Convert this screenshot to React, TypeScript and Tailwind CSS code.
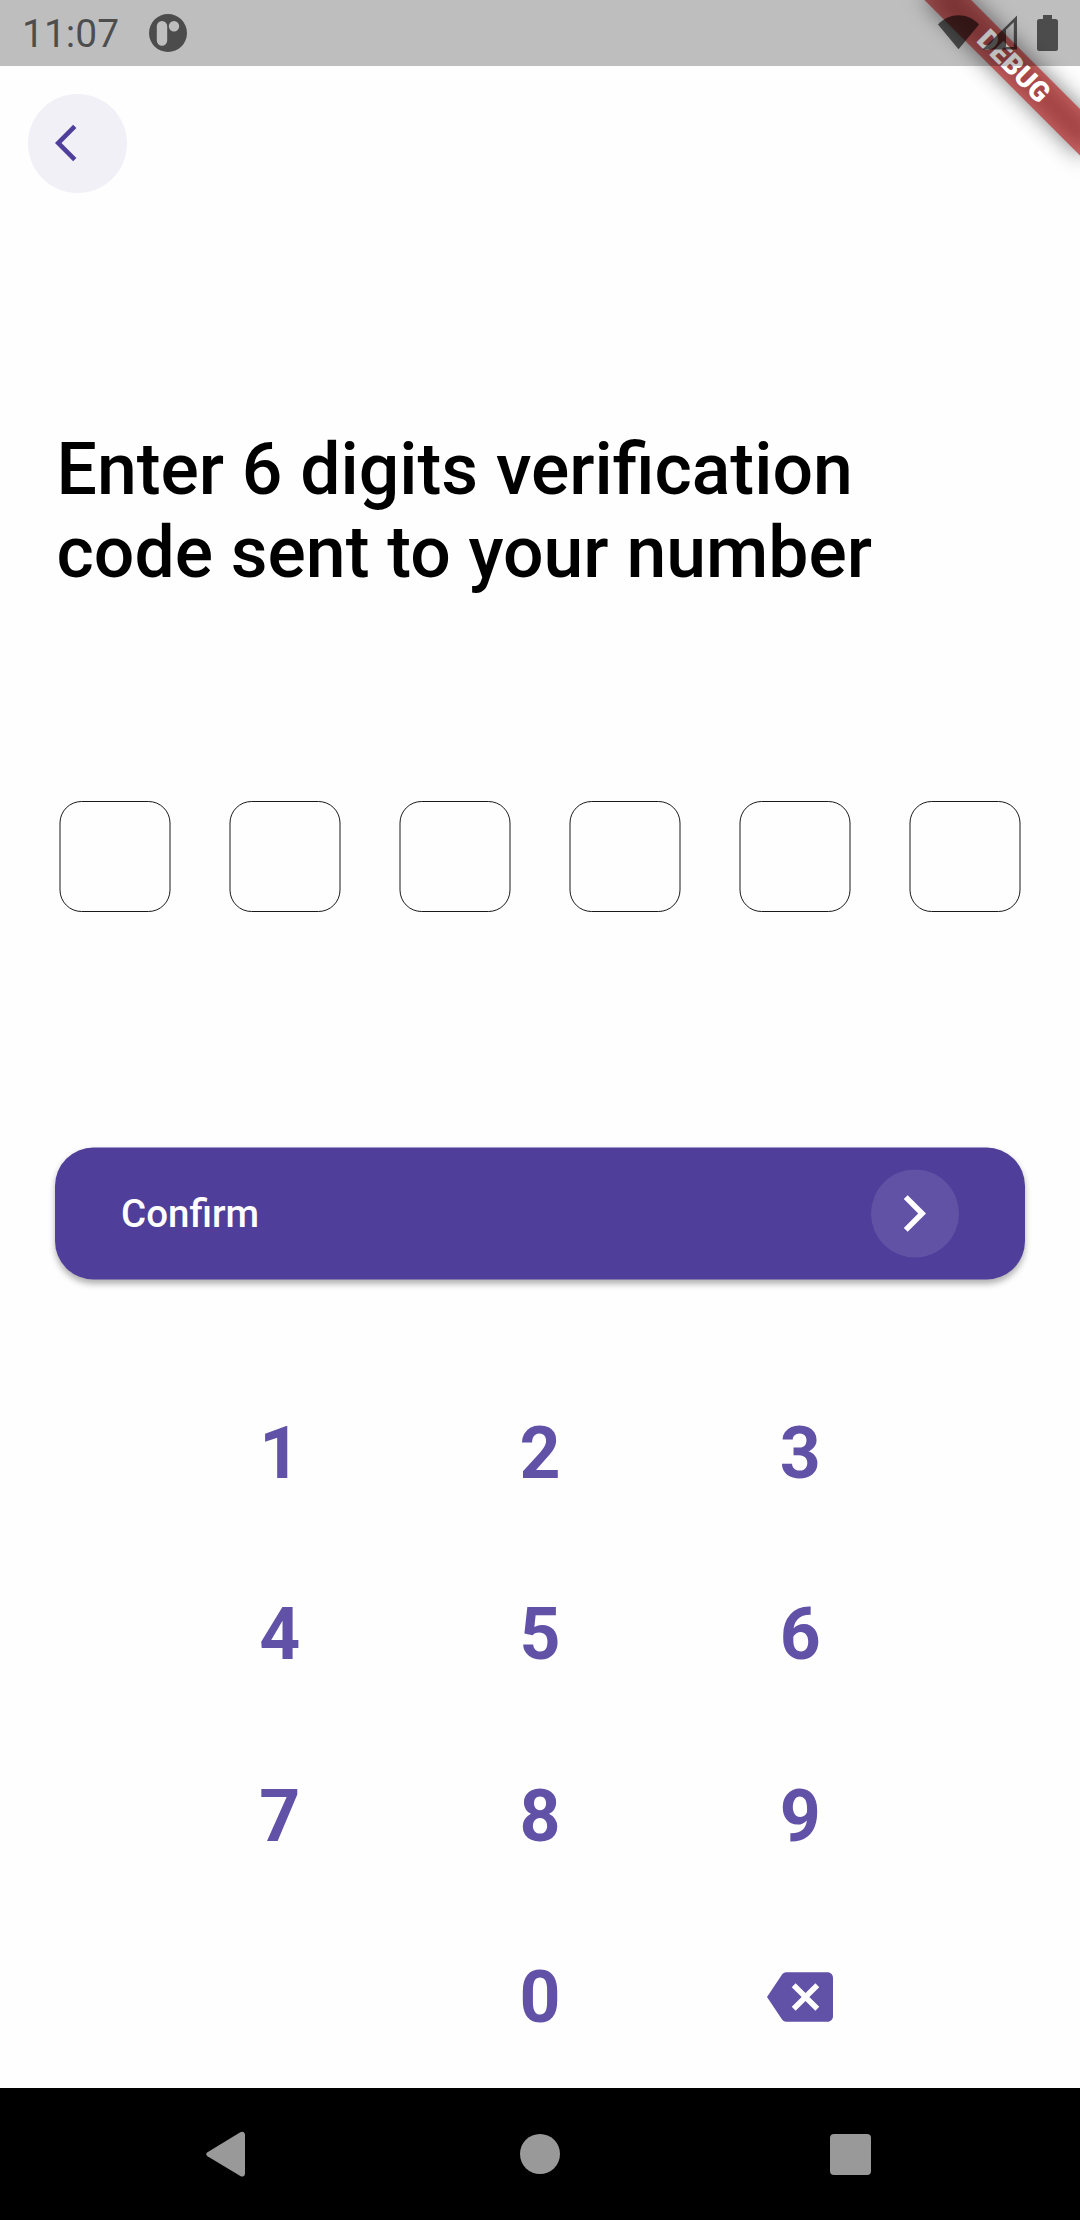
import React from "react";

const digits = ["1", "2", "3", "4", "5", "6", "7", "8", "9"];

function StatusBar() {
  return (
    <header className="relative z-20 flex h-[66px] items-center justify-between bg-black/25 pl-[22px] pr-[21px] text-black/60">
      <div className="flex items-center">
        <span className="w-[98px] pt-[2px] text-[39px] leading-[64px]">11:07</span>
        <svg className="ml-[29px] h-[38px] w-[38px]" viewBox="0 0 38 38" fill="currentColor">
          <path
            fillRule="evenodd"
            d="M19 0a19 19 0 1 1 0 38a19 19 0 0 1 0-38zM13 7a5.2 5.2 0 0 0-5.2 5.2v14.4a5.2 5.2 0 0 0 10.4 0V12.2A5.2 5.2 0 0 0 13 7zM25 7a5.2 5.2 0 1 0 0 10.4a5.2 5.2 0 0 0 0-10.4z"
          />
        </svg>
      </div>
      <svg className="h-[66px] w-[122px]" viewBox="937 0 122 66" fill="currentColor">
        <path d="M938 24.5C949.500 12.200 967.500 12.200 979 24.500L958.500 49.300z" />
        <path fillRule="evenodd" d="M982.500 49.500L1017 15.500V49.500zM1006 29.800V47H1013.800V22.200z" />
        <path d="M1043 15h9v4h3.500a2.500 2.500 0 0 1 2.500 2.500v27a2.500 2.500 0 0 1-2.500 2.500h-16a2.500 2.500 0 0 1-2.500-2.500v-27a2.500 2.500 0 0 1 2.500-2.500h3.500z" />
      </svg>
    </header>
  );
}

function DebugBanner() {
  return (
    <div className="absolute right-0 top-0 z-10 h-[220px] w-[220px] overflow-hidden">
      <div className="absolute left-[220px] top-0 h-0 w-0 rotate-45">
        <div className="absolute left-[-110px] top-[77px] h-[33px] w-[220px] bg-black/50 blur-[11px]" />
        <div className="absolute left-[-110px] top-[77px] h-[33px] w-[220px] bg-[#b71c1c]/[0.627] text-center text-[28px] font-black leading-[33px] text-white">
          DEBUG
        </div>
      </div>
    </div>
  );
}

function Key({ children }: { children: React.ReactNode }) {
  return (
    <button className="flex h-[181.25px] w-[260.3px] items-center justify-center text-[71.5px] font-bold text-[#6151a7]">
      {children}
    </button>
  );
}

export default function App() {
  return (
    <div className="relative flex h-[2220px] w-[1080px] flex-col overflow-hidden bg-[#fefefe] font-['Roboto',sans-serif]">
      <StatusBar />
      <DebugBanner />
      <main className="flex grow flex-col">
        <button className="ml-[27.5px] mt-[27.5px] flex h-[99px] w-[99px] items-center justify-center rounded-full bg-[#f1f0f7]">
          <svg className="h-[44px] w-[44px]" viewBox="0 0 24 24" fill="#4f3e9a">
            <path d="M11.670 3.870 9.900 2.100 0 12l9.900 9.900 1.770-1.770L3.540 12z" />
          </svg>
        </button>

        <h1 className="ml-[56.5px] mt-[235.5px] whitespace-nowrap text-[71.5px] font-medium leading-[83px] text-black">
          Enter 6 digits verification
          <br />
          code sent to your number
        </h1>

        <div className="ml-[59px] mt-[207px] flex gap-[59px]">
          {[0, 1, 2, 3, 4, 5].map((slot) => (
            <div
              key={slot}
              className="h-[111px] w-[111px] translate-x-[0.5px] rounded-[22px] border border-black/90"
            />
          ))}
        </div>

        <button className="ml-[55px] mt-[235px] flex h-[132px] w-[970px] translate-y-[0.5px] items-center justify-between rounded-[38.5px] bg-[#4f3e9a] pl-[66px] pr-[66px] shadow-[0_4px_6px_rgba(0,0,0,0.3)]">
          <span className="mb-[2px] text-[38.5px] font-medium leading-[45px] text-white">Confirm</span>
          <span className="flex h-[88px] w-[88px] items-center justify-center rounded-full bg-[#6252a6]">
            <svg className="h-[44px] w-[44px]" viewBox="0 0 24 24" fill="white">
              <path d="M5.880 4.120 13.760 12l-7.880 7.880L8 22l10-10L8 2z" />
            </svg>
          </span>
        </button>

        <div className="mt-[84px] grid grid-cols-[repeat(3,260.3px)] justify-center">
          {digits.map((digit) => (
            <Key key={digit}>{digit}</Key>
          ))}
          <span />
          <Key>0</Key>
          <Key>
            <svg className="h-[66px] w-[66px]" viewBox="0 0 24 24" fill="currentColor">
              <path d="M22 3H7c-.69 0-1.230.350-1.590.880L0 12l5.410 8.110c.360.530.900.890 1.590.890h15c1.100 0 2-.9 2-2V5c0-1.100-.9-2-2-2zm-3 12.590L17.590 17 14 13.410 10.410 17 9 15.590 12.590 12 9 8.410 10.410 7 14 10.590 17.590 7 19 8.410 15.410 12 19 15.590z" />
            </svg>
          </Key>
        </div>
      </main>
      <nav className="absolute inset-x-0 bottom-0 flex h-[132px] items-center bg-black text-[#999999]">
        <svg className="ml-[206px] h-[46px] w-[40px]" viewBox="0 0 40 46" fill="currentColor">
          <path d="M1.500 21.300L34.300 1.300Q36 .4 37.500 1.100Q39 2 39 4V42.500Q39 44.500 37.500 45.200Q36 45.900 34.300 45L1.500 25.300Q-.9 23.400 1.500 21.300z" />
        </svg>
        <span className="ml-[274px] h-[40px] w-[40px] rounded-full bg-[#999999]" />
        <span className="ml-[270px] mt-[1px] h-[41px] w-[41px] rounded-[4px] bg-[#999999]" />
      </nav>
    </div>
  );
}
